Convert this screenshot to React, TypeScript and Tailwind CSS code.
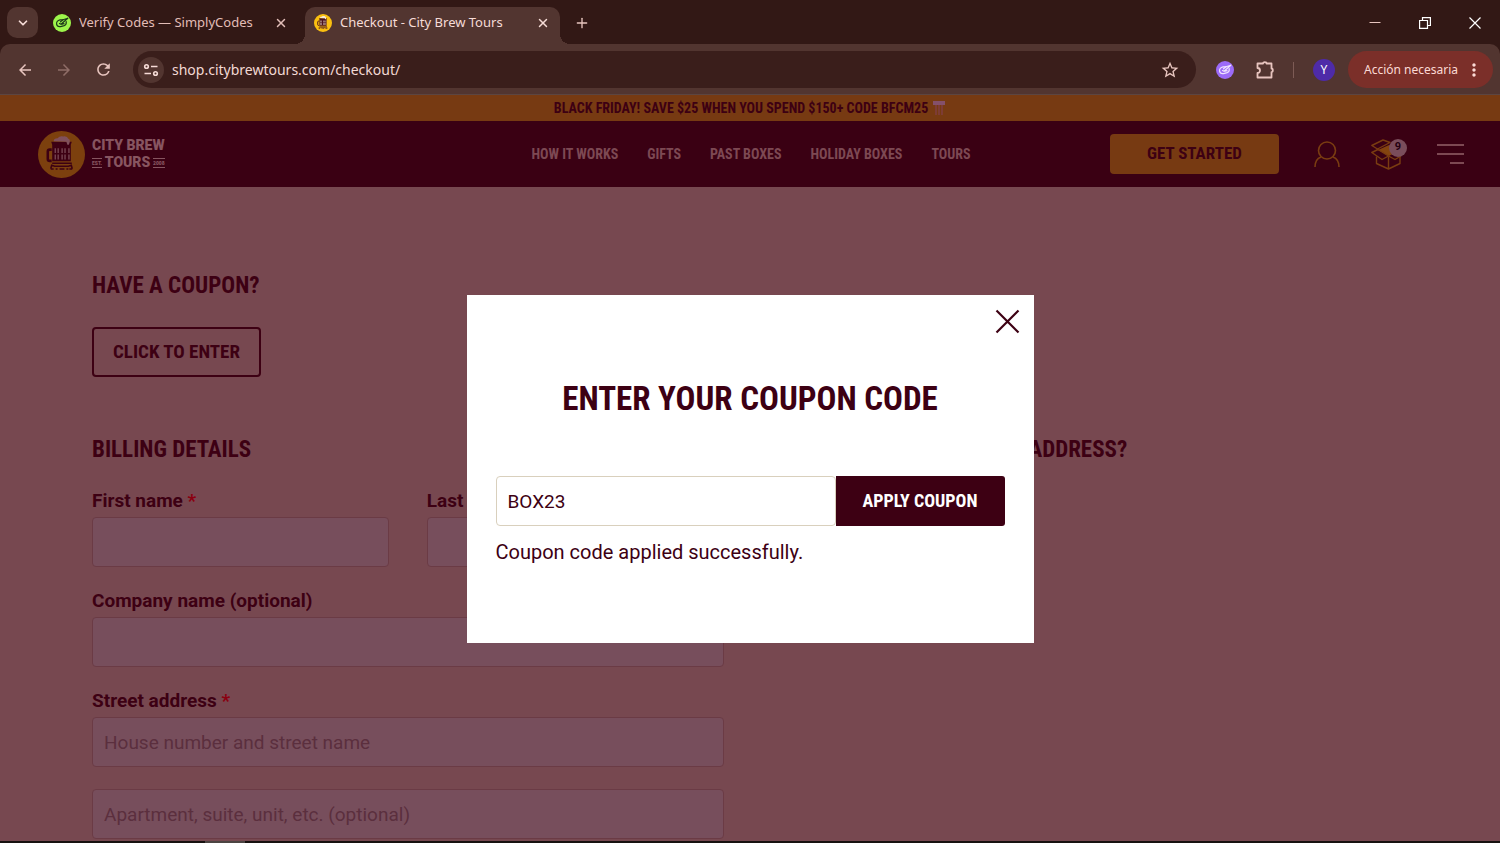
import type { ReactNode } from 'react';
import { ChevronDown, Plus, X } from 'lucide-react';
import { MdArrowBack, MdArrowForward, MdMoreVert, MdRefresh, MdStarBorder } from 'react-icons/md';

const navLinks = ['How it works', 'Gifts', 'Past boxes', 'Holiday boxes', 'Tours'];

const display = "font-['Roboto_Condensed','Liberation_Sans_Narrow',sans-serif] font-bold uppercase";

function CodesIcon({ className }: { className: string }) {
  return (
    <svg viewBox="0 0 18 18" className={className} aria-hidden="true">
      <circle cx="9" cy="9" r="9" fill="currentColor" />
      <g fill="none" stroke="var(--mark)" strokeWidth="1.2" strokeLinecap="round" strokeLinejoin="round">
        <path d="M10 5.800H7C4.700 6.200 3.300 8.200 3.600 10.200c.3 1.800 2 2.700 4 2.400l3.600-1c1.600-.5 2.300-2 2-4" />
        <path d="M6.500 9.500l1.500.8 6.800-6.100-4.800 1.600-2.500 2M9 10.200l2-.6" />
      </g>
    </svg>
  );
}

function MugBadge({ className, disc, mug, foam }: { className: string; disc: string; mug: string; foam: string }) {
  return (
    <svg viewBox="0 0 48 48" className={className} aria-hidden="true">
      <circle cx="24" cy="24" r="24" fill={disc} />
      <path d="M14 19h-2q-2 0-2 2v7.500q0 2 2 2h2" fill="none" stroke={mug} strokeWidth="2.600" />
      <path d="M13.500 11h21l-1 3v17h-19V14z" fill={mug} />
      <path d="M16 10.500q0-3 4-3 2-3 6-2 4-.5 5 2.500 2 .5 1.500 3l-1 3h-1.500l-1-3z" fill={foam} />
      <g fill={foam}>
        {[17, 20, 24, 27, 31].map((x) => (
          <path key={x} d={`M${x} 17.500h1.200v5h-1.200zM${x} 24h1.200v5h-1.200z`} />
        ))}
      </g>
      <path d="M14.500 33h20M13 38.500l1-3.500 3 1h14l3-1 1 3.500M13 38.800h3m2 0h2m2 0h5m2 0h2m1 0h3" fill="none" stroke={mug} strokeWidth="1.600" />
    </svg>
  );
}

function SiteLogo() {
  return (
    <a href="#home" className="flex items-center gap-[7px] justify-self-start text-[#875560]">
      <MugBadge className="size-[47px]" disc="#7c400e" mug="#3d0013" foam="#80505c" />
      <span className="grid font-['Roboto',sans-serif] text-sm leading-[17px] font-black">
        <span>CITY BREW</span>
        <span className="flex items-center justify-between">
          <span className="border-y border-current text-[5px] leading-[8px]">EST.</span>
          <span>TOURS</span>
          <span className="border-y border-current text-[5px] leading-[8px]">2008</span>
        </span>
      </span>
    </a>
  );
}

function Tab({ title, icon, active = false }: { title: string; icon: ReactNode; active?: boolean }) {
  return (
    <div
      className={
        active
          ? 'relative flex h-[37px] w-[255px] items-center rounded-t-[10px] bg-[#523530] pr-[10px] pb-[6px] pl-[9px] text-[#f6dcd7]'
          : 'flex h-[37px] w-[252px] items-center pr-[17px] pb-[6px] text-[#e2bdb7]'
      }
    >
      {active && (
        <>
          <span className="absolute bottom-0 -left-[10px] size-[10px] bg-[radial-gradient(circle_at_0_0,transparent_10px,#523530_10px)]" />
          <span className="absolute -right-[10px] bottom-0 size-[10px] bg-[radial-gradient(circle_at_100%_0,transparent_10px,#523530_10px)]" />
        </>
      )}
      {icon}
      <span className="ml-2 flex-1 truncate text-[13px]">{title}</span>
      <button aria-label={`Close ${title}`}>
        <X size={14} strokeWidth={2.5} />
      </button>
    </div>
  );
}

function BrowserChrome() {
  return (
    <header className="shrink-0 bg-[#321815] font-['Noto_Sans',sans-serif] text-[#e8c5bf]">
      <div className="flex h-11 items-start pt-[7px]">
        <button aria-label="Search tabs" className="ml-[7px] grid size-[31px] place-items-center rounded-[10px] bg-[#523530] text-[#f6dcd7]">
          <ChevronDown size={14} strokeWidth={3} />
        </button>
        <div className="ml-[15px] flex">
          <Tab
            title="Verify Codes — SimplyCodes"
            icon={<CodesIcon className="size-[18px] shrink-0 text-[#9df54b] [--mark:#1d3a1a]" />}
          />
          <Tab
            active
            title="Checkout - City Brew Tours"
            icon={<MugBadge className="size-[18px] shrink-0" disc="#fbc010" mug="#4a1220" foam="#f6ead8" />}
          />
        </div>
        <button aria-label="New tab" className="ml-[14px] grid h-[31px] w-4 place-items-center">
          <Plus size={16} />
        </button>
        <div className="mr-[19px] ml-auto flex h-[31px] items-center gap-[38px] text-white">
          <button aria-label="Minimize">
            <svg viewBox="0 0 12 12" className="size-3"><path d="M.5 5.500h11" stroke="#e8c5bf" /></svg>
          </button>
          <button aria-label="Restore">
            <svg viewBox="0 0 12 12" className="size-3" fill="none" stroke="currentColor" strokeWidth="1.200">
              <path d="M.6 3.500h7.900v7.900H.6zM3.500 3.500V.6h7.900v7.900H8.500" />
            </svg>
          </button>
          <button aria-label="Close window">
            <svg viewBox="0 0 12 12" className="size-3"><path d="M.5.500l11 11M11.500.500l-11 11" stroke="currentColor" strokeWidth="1.200" /></svg>
          </button>
        </div>
      </div>
      <div className="flex h-[51px] items-center rounded-t-[10px] border-b border-[#5c4541] bg-[#523530] pt-px pr-[7px] pl-4">
        <div className="flex gap-[21px]">
          <button aria-label="Back"><MdArrowBack size={18} /></button>
          <button aria-label="Forward" className="text-[#8f6d67]"><MdArrowForward size={18} /></button>
          <button aria-label="Reload"><MdRefresh size={19} /></button>
        </div>
        <div className="ml-5 flex h-[37px] flex-1 items-center rounded-full bg-[#3a1e1b] pr-4 pl-[5px]">
          <button aria-label="Site information" className="grid size-[26px] place-items-center rounded-full bg-[#523530]">
            <svg viewBox="0 0 16 16" className="size-4" fill="none" stroke="#f6dcd7" strokeWidth="1.600">
              <circle cx="3.500" cy="4.500" r="1.800" />
              <path d="M8 4.500h6.500M1.500 11.500H8" />
              <circle cx="12.500" cy="11.500" r="1.800" />
            </svg>
          </button>
          <input aria-label="Address" className="ml-2 min-w-0 flex-1 text-sm text-[#f3d9d4] outline-none" defaultValue="shop.citybrewtours.com/checkout/" />
          <button aria-label="Bookmark"><MdStarBorder size={20} /></button>
        </div>
        <div className="ml-5 flex items-center">
          <button aria-label="SimplyCodes"><CodesIcon className="size-[18px] text-[#9c6bf8] [--mark:#efe4ff]" /></button>
          <button aria-label="Extensions" className="ml-[21px]">
            <svg viewBox="0 0 20 20" className="size-5" fill="none" stroke="currentColor" strokeWidth="1.800" strokeLinejoin="round">
              <path d="M2.500 3.500H8a1.800 1.300 0 0 1 3.600 0h4.900v5a1.300 1.800 0 0 1 0 3.600v5.400h-14V13a2.400 2.400 0 0 0 0-5z" />
            </svg>
          </button>
          <span className="ml-[18px] h-4 w-px bg-[#7d5b55]" />
          <span className="ml-[19px] grid size-[22px] place-items-center rounded-full bg-[#4e2ba8] text-xs text-white">Y</span>
          <button className="ml-[13px] flex h-[37px] w-[145px] items-center justify-between rounded-full bg-[#7b2f29] pr-[9px] pl-4 text-xs text-[#fbdad5]">
            Acción necesaria
            <MdMoreVert size={20} />
          </button>
        </div>
      </div>
    </header>
  );
}

function SiteHeader() {
  return (
    <>
      <p className={`${display} flex h-[26px] items-center justify-center gap-1 bg-[#773a12] text-sm text-[#3d0013]`}>
        Black Friday! Save $25 when you spend $150+ Code BFCM25
        <svg viewBox="0 0 14 16" className="h-4 w-3.5" aria-hidden="true">
          <path d="M1 1h12v4H1z" fill="#84506a" />
          <path d="M3 5h2v10H3zM6 5h2v10H6zM9 5h2v10H9z" fill="#7d3c35" />
        </svg>
      </p>
      <div className="grid h-[66px] grid-cols-[1fr_auto_1fr] items-center bg-[#3a0013] pr-9 pl-[38px]">
        <SiteLogo />
        <nav className={`${display} flex gap-[29px] text-sm text-[#7d4953]`}>
          {navLinks.map((link) => (
            <a key={link} href={`#${link}`}>{link}</a>
          ))}
        </nav>
        <div className="flex items-center justify-self-end">
          <button className={`${display} h-10 w-[169px] rounded-[4px] bg-[#773a12] text-[17px] text-[#3d0013]`}>Get started</button>
          <a href="#account" aria-label="Account" className="ml-[35px]">
            <svg viewBox="0 0 26 26" className="size-[26px]" fill="none" stroke="#7a3c11" strokeWidth="1.600">
              <circle cx="13" cy="9.500" r="8.500" />
              <path d="M1 26c0-5 2-8.500 6-10M25 26c0-5-2-8.500-6-10" />
            </svg>
          </a>
          <a href="#cart" aria-label="Cart, 9 items" className="relative ml-[31px] h-[31px] w-9">
            <svg viewBox="0 0 36 31" className="h-[31px] w-9" fill="none" stroke="#7a3c11" strokeWidth="1.400" strokeLinejoin="round">
              <path d="M7 11l11-5 11 5-11 6z" fill="#84440f" stroke="none" />
              <path d="M.8 6.500L12 1l7 2.500-12.500 6.500zM.8 13.500L7 10.500l10.500 6.500-6.500 3.500zM17.500 17l6.500 3.500 6-3.500" />
              <path d="M5.500 17.500v7L17.500 30 29 24.500v-7M17.500 17.500V30" />
            </svg>
            <span className="absolute top-0 right-0 grid size-[18px] place-items-center rounded-full bg-[#7a4d5b] font-['Roboto',sans-serif] text-[11px] font-bold text-[#240010]">9</span>
          </a>
          <button aria-label="Menu" className="ml-[30px] grid w-[27px] justify-items-end gap-[7px]">
            <span className="h-[2px] w-full bg-[#7d4953]" />
            <span className="h-[2px] w-full bg-[#7d4953]" />
            <span className="h-[2px] w-[14px] bg-[#7d4953]" />
          </button>
        </div>
      </div>
    </>
  );
}

interface FieldProps {
  id: string;
  label: string;
  required?: boolean;
  placeholder?: string;
}

const inputBox = 'h-[50px] w-full rounded-[4px] border border-[#6b3b45] bg-[#774e5c] px-[11px] text-[19px] placeholder:text-[#5b2f3e]';

function Field({ id, label, required = false, placeholder }: FieldProps) {
  return (
    <div>
      <label htmlFor={id} className="block text-[19px] leading-[33px] font-bold">
        {label} {required && <span className="text-[#8b0010]">*</span>}
      </label>
      <input id={id} placeholder={placeholder} className={inputBox} />
    </div>
  );
}

function CheckoutForm() {
  return (
    <main className="px-[92px] pt-[79px]">
      <h2 className={`${display} text-[23px] leading-10`}>Have a coupon?</h2>
      <button className={`${display} mt-[21px] h-[50px] w-[169px] rounded-[4px] border-2 border-[#3d0013] text-[19px]`}>
        Click to enter
      </button>
      <div className="mt-[53px] grid grid-cols-[48%_48%] justify-between">
        <section>
          <h2 className={`${display} text-[23px] leading-10`}>Billing details</h2>
          <div className="mt-[14px] grid gap-[17px]">
            <div className="grid grid-cols-[47%_47%] justify-between">
              <Field id="first-name" label="First name" required />
              <Field id="last-name" label="Last name" required />
            </div>
            <Field id="company" label="Company name (optional)" />
            <Field id="street" label="Street address" required placeholder="House number and street name" />
          </div>
          <input aria-label="Apartment" placeholder="Apartment, suite, unit, etc. (optional)" className={`${inputBox} mt-[22px]`} />
        </section>
        <section>
          <h2 className={`${display} pl-11 text-[23px] leading-10`}>Ship to a different address?</h2>
        </section>
      </div>
    </main>
  );
}

function CouponModal() {
  return (
    <div className="absolute inset-0 flex items-center justify-center pt-[2px]">
      <div role="dialog" aria-labelledby="coupon-title" className="relative w-[567px] bg-white px-[29px] pt-20 pb-[75px]">
        <button aria-label="Close" className="absolute top-[14px] right-[14px]">
          <svg viewBox="0 0 25 25" className="size-[25px]"><path d="M1.500 1.500l22 22M23.500 1.500l-22 22" stroke="#3d0013" strokeWidth="2.200" /></svg>
        </button>
        <h1 id="coupon-title" className={`${display} text-center text-[33px] leading-[48px]`}>Enter your coupon code</h1>
        <form className="mt-[53px] flex" onSubmit={(e) => e.preventDefault()}>
          <input aria-label="Coupon code" defaultValue="BOX23" className="h-[50px] min-w-0 flex-1 rounded-[4px] border border-[#d9d0bd] px-[11px] text-[19px]" />
          <button className={`${display} h-[50px] w-[169px] rounded-r-[3px] bg-[#3d0013] text-lg text-white`}>Apply coupon</button>
        </form>
        <p className="mt-[10px] text-xl leading-8">Coupon code applied successfully.</p>
      </div>
    </div>
  );
}

export default function App() {
  return (
    <div className="flex h-screen flex-col overflow-hidden bg-[#171110]">
      <BrowserChrome />
      <div className="relative min-h-0 flex-1 overflow-hidden bg-[#774850] font-['Roboto',sans-serif] text-[#3d0013]">
        <SiteHeader />
        <CheckoutForm />
        <CouponModal />
      </div>
      <div className="h-[2px] shrink-0 pl-[205px]">
        <div className="h-full w-10 bg-[#4c4442]" />
      </div>
    </div>
  );
}
